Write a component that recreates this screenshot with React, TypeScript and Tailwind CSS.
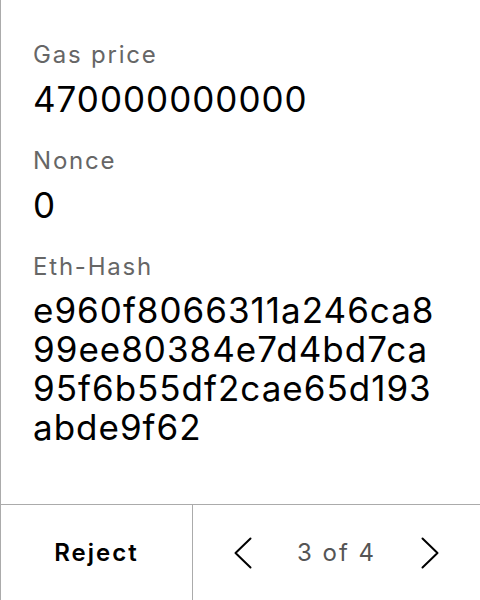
import React from 'react';

const fields = [
  { label: 'Gas price', value: '470000000000' },
  { label: 'Nonce', value: '0' },
];

const hash = ['e960f8066311a246ca8', '99ee80384e7d4bd7ca', '95f6b55df2cae65d193', 'abde9f62'];

const Chevron: React.FC<{ dir: 'left' | 'right' }> = ({ dir }) => (
  <svg width="18" height="32" viewBox="0 0 18 32" fill="none">
    <path
      d={dir === 'left' ? 'M16.5 1.5 L1.5 16 L16.5 30.5' : 'M1.5 1.5 L16.5 16 L1.5 30.5'}
      stroke="#000"
      strokeWidth="2"
      strokeLinecap="round"
      strokeLinejoin="round"
    />
  </svg>
);

const App: React.FC = () => {
  return (
    <div className="flex h-[600px] w-[480px] flex-col border-l border-[#ababab] bg-white font-['Inter',sans-serif] text-black">
      {/* Details */}
      <div className="flex-1 px-[32px] pt-[40px]">
        {fields.map((f) => (
          <div key={f.label} className="mb-[25px]">
            <div className="text-[24px] leading-[30px] tracking-[1.8px] text-[#666]">{f.label}</div>
            <div className="mt-[7px] text-[35px] leading-[44px] tracking-[1px]">{f.value}</div>
          </div>
        ))}
        <div className="text-[24px] leading-[30px] tracking-[1.8px] text-[#666]">Eth-Hash</div>
        <div className="mt-[9px] text-[35px] leading-[39px] tracking-[1px]">
          {hash.map((line) => (
            <div key={line}>{line}</div>
          ))}
        </div>
      </div>

      {/* Footer actions */}
      <div className="flex h-[96px] border-t border-[#ababab]">
        <button className="flex w-[192px] items-center justify-center border-r border-[#ababab] text-[24px] font-semibold tracking-[2px]">
          Reject
        </button>
        <div className="flex flex-1 items-center justify-center gap-[45px]">
          <button className="flex items-center">
            <Chevron dir="left" />
          </button>
          <span className="text-[24px] tracking-[2px] text-[#555]">3 of 4</span>
          <button className="flex items-center">
            <Chevron dir="right" />
          </button>
        </div>
      </div>
    </div>
  );
};

export default App;
